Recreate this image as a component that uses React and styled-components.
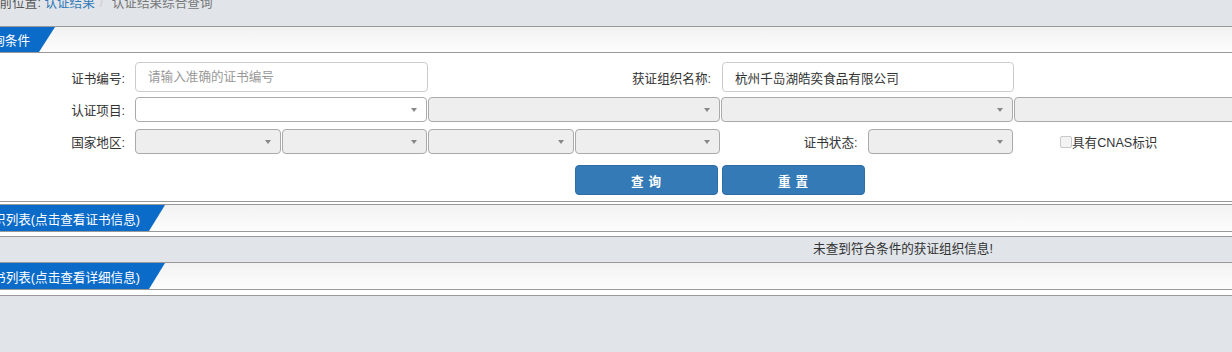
import React from 'react';
import styled, { createGlobalStyle } from 'styled-components';

const GlobalStyle = createGlobalStyle`
  * { box-sizing: border-box; }
  html, body {
    margin: 0;
    padding: 0;
    overflow: hidden;
    background: #e1e5ea;
  }
  body {
    font-family: "Liberation Sans", "Noto Sans CJK SC", sans-serif;
    font-size: 12.6px;
    color: #333;
  }
`;

// the page is wider than the window and scrolled a little to the right
const Page = styled.div`
  width: 1860px;
  margin-left: -27px;
`;

const Breadcrumb = styled.div`
  height: 26px;
  line-height: 7px;
  padding-left: 14px;
  color: #555;
  white-space: nowrap;
`;

const CrumbLink = styled.span`
  color: #337ab7;
`;

const CrumbSep = styled.span`
  color: #ccc;
  padding: 0 5px;
`;

const CrumbActive = styled.span`
  color: #777;
`;

const Content = styled.div`
  background: #fff;
`;

const PanelHeader = styled.div`
  display: flex;
  height: ${p => p.$h}px;
  border-top: 1px solid #999;
  border-bottom: 1px solid #999;
  background: linear-gradient(to bottom, #f2f2f2, #fdfdfd);
`;

const Tab = styled.div`
  flex: none;
  width: ${p => p.$w}px;
  display: flex;
  align-items: center;
  justify-content: flex-end;
  padding-right: 25px;
  background: #0a6bc9;
  color: #fff;
  white-space: nowrap;
  clip-path: polygon(0 0, 100% 0, calc(100% - 16px) 100%, 0 100%);
`;

const Form = styled.div`
  padding: 9px 0 6px;
  border-bottom: 1px solid #999;
`;

const FormRow = styled.div`
  display: grid;
  grid-template-columns: 162px repeat(8, 146.5px);
  align-items: center;
  margin-top: ${p => p.$mt || 0}px;
`;

const Label = styled.div`
  grid-column: span ${p => p.$span || 1};
  text-align: right;
  padding-right: 10px;
  white-space: nowrap;
`;

const TextInput = styled.input`
  grid-column: span 2;
  width: calc(100% - ${p => p.$ml || 0}px);
  margin-left: ${p => p.$ml || 0}px;
  height: 30px;
  padding: 0 12px;
  border: 1px solid #ccc;
  border-radius: 4px;
  font: inherit;
  color: #333;
  outline: none;

  &::placeholder {
    color: #999;
  }
`;

const Select = styled.div`
  grid-column: span ${p => p.$span || 1};
  height: 25px;
  margin-right: 1px;
  display: flex;
  align-items: center;
  justify-content: flex-end;
  padding-right: 9px;
  border: 1px solid #aaa;
  border-radius: 4px;
  background: ${p => (p.$disabled ? '#eee' : '#fff')};
`;

const Arrow = styled.span`
  width: 0;
  height: 0;
  border-style: solid;
  border-width: 4px 3.5px 0;
  border-color: #888 transparent transparent;
`;

const CheckCell = styled.label`
  display: flex;
  align-items: center;
  padding-left: 46px;
  white-space: nowrap;
`;

const CheckBox = styled.span`
  width: 12px;
  height: 12px;
  flex: none;
  border: 1px solid #c8c8c8;
  border-radius: 2px;
  background: #f3f3f3;
`;

const ButtonGroup = styled.div`
  grid-column: 5 / span 2;
  display: flex;
  gap: 4px;
`;

const Button = styled.button`
  width: 143px;
  height: 30px;
  padding: 0 0 0 5px;
  border: 1px solid #2e6da4;
  border-radius: 4px;
  background: #337ab7;
  color: #fff;
  font: bold 12.6px "Noto Sans CJK SC", sans-serif;
  letter-spacing: 5px;
`;

const Gap = styled.div`
  height: ${p => p.$h}px;
`;

const Table = styled.div`
  border-top: 1px solid #999;
`;

const EmptyRow = styled.div`
  height: 25px;
  line-height: 25px;
  text-align: center;
  background: #e1e5ea;
`;

const BottomBody = styled.div`
  padding-top: 5px;
  border-bottom: 1px solid #999;
`;

const SelectBox = ({ span, disabled, noArrow }) => (
  <Select $span={span} $disabled={disabled}>{!noArrow && <Arrow />}</Select>
);

export default function App() {
  return (
    <>
      <GlobalStyle />
      <Page>
        <Breadcrumb>
          当前位置: <CrumbLink>认证结果</CrumbLink>
          <CrumbSep>/&nbsp;</CrumbSep>
          <CrumbActive>认证结果综合查询</CrumbActive>
        </Breadcrumb>

        <Content>
          <PanelHeader $h={27}>
            <Tab $w={82}>查询条件</Tab>
          </PanelHeader>
          <Form>
            <FormRow>
              <Label>证书编号:</Label>
              <TextInput placeholder="请输入准确的证书编号" />
              <Label $span={2}>获证组织名称:</Label>
              <TextInput $ml={1} defaultValue="杭州千岛湖皓奕食品有限公司" />
            </FormRow>
            <FormRow $mt={5}>
              <Label>认证项目:</Label>
              <SelectBox span={2} />
              <SelectBox span={2} disabled />
              <SelectBox span={2} disabled />
              <SelectBox span={2} disabled />
            </FormRow>
            <FormRow $mt={7}>
              <Label>国家地区:</Label>
              <SelectBox disabled />
              <SelectBox disabled />
              <SelectBox disabled />
              <SelectBox disabled />
              <Label>证书状态:</Label>
              <SelectBox disabled />
              <CheckCell>
                <CheckBox />
                具有CNAS标识
              </CheckCell>
            </FormRow>
            <FormRow $mt={11}>
              <ButtonGroup>
                <Button>查询</Button>
                <Button>重置</Button>
              </ButtonGroup>
            </FormRow>
          </Form>

          <Gap $h={2} />
          <PanelHeader $h={28}>
            <Tab $w={192}>获证组织列表(点击查看证书信息)</Tab>
          </PanelHeader>
          <Gap $h={4} />
          <Table>
            <EmptyRow>未查到符合条件的获证组织信息!</EmptyRow>
          </Table>

          <PanelHeader $h={28}>
            <Tab $w={192}>证书列表(点击查看详细信息)</Tab>
          </PanelHeader>
          <BottomBody />
        </Content>
      </Page>
    </>
  );
}
